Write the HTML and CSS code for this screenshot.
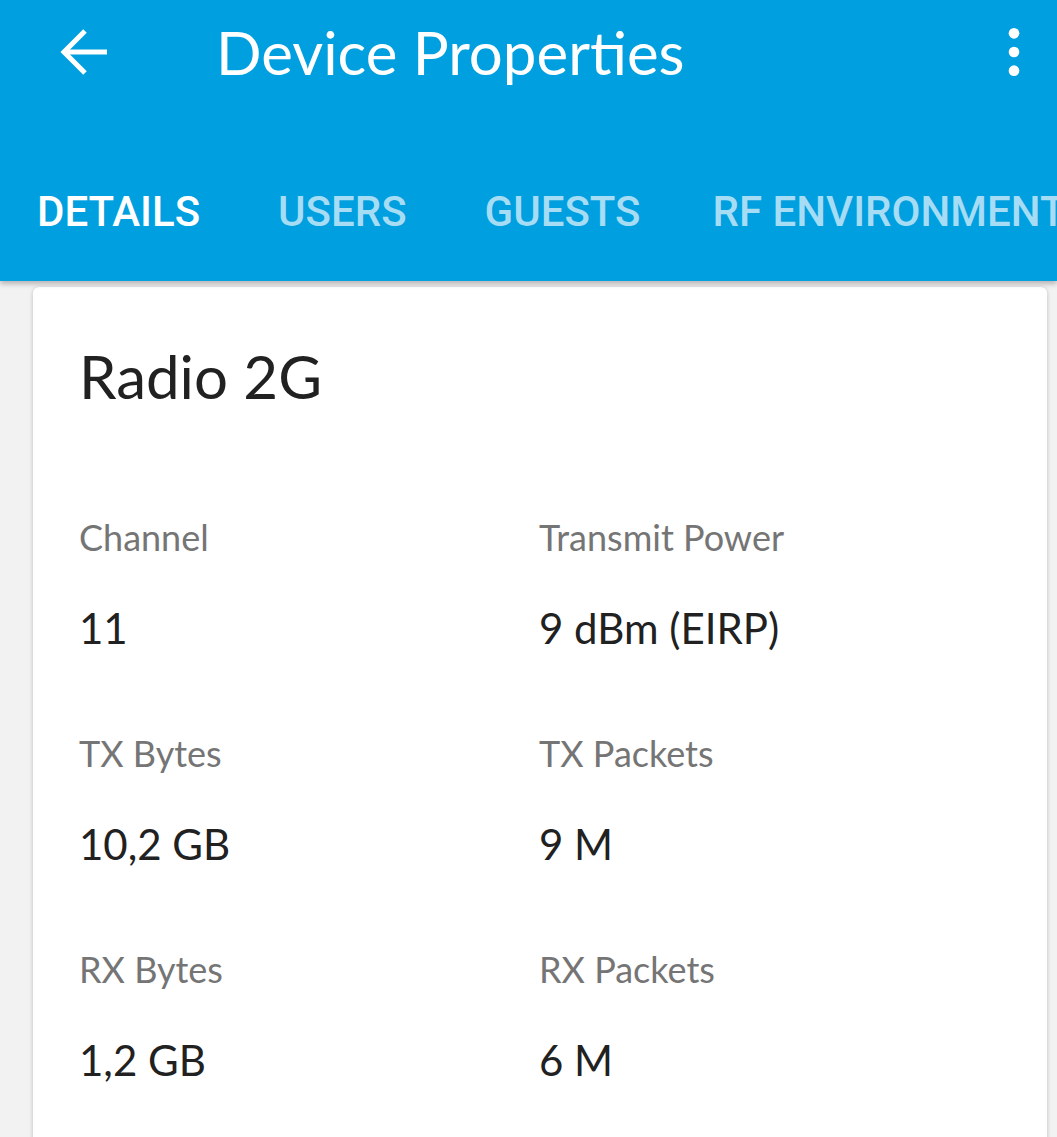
FILE: index.html
```html
<!DOCTYPE html>
<html lang="en">
<head>
  <meta charset="UTF-8">
  <title>Device Properties</title>
  <meta name="viewport" content="width=device-width, initial-scale=1.0" />
  <link rel="stylesheet" href="styles.css">
</head>
<body>

  <!-- App Bar -->
  <header class="appbar">
    <div class="toolbar">
      <button class="icon-btn back" aria-label="Back">
        <svg viewBox="0 0 48 48"><path d="M47 24H5M25 3L4 24l21 21" fill="none" stroke="#fff" stroke-width="5"/></svg>
      </button>
      <h1 class="title">Device Properties</h1>
      <button class="icon-btn more" aria-label="More">
        <svg viewBox="0 0 24 24"><circle cx="12" cy="5" r="2" fill="#fff"/><circle cx="12" cy="12" r="2" fill="#fff"/><circle cx="12" cy="19" r="2" fill="#fff"/></svg>
      </button>
    </div>
    <nav class="tabs">
      <span class="tab active">DETAILS</span>
      <span class="tab">USERS</span>
      <span class="tab">GUESTS</span>
      <span class="tab">RF ENVIRONMENT</span>
    </nav>
  </header>

  <!-- Radio card -->
  <main class="content">
    <section class="card">
      <h2 class="card-title">Radio 2G</h2>
      <div class="props">
        <div class="prop">
          <div class="label">Channel</div>
          <div class="value">11</div>
        </div>
        <div class="prop">
          <div class="label">Transmit Power</div>
          <div class="value">9 dBm (EIRP)</div>
        </div>
        <div class="prop">
          <div class="label">TX Bytes</div>
          <div class="value">10,2 GB</div>
        </div>
        <div class="prop">
          <div class="label">TX Packets</div>
          <div class="value">9 M</div>
        </div>
        <div class="prop">
          <div class="label">RX Bytes</div>
          <div class="value">1,2 GB</div>
        </div>
        <div class="prop">
          <div class="label">RX Packets</div>
          <div class="value">6 M</div>
        </div>
      </div>
    </section>
  </main>

</body>
</html>
```

FILE: styles.css
```css
* { box-sizing: border-box; }

body {
  font-family: Lato, "Noto Sans", sans-serif;
  background-color: #f2f2f2;
  margin: 0;
  padding: 0;
  overflow: hidden;
}

/* App Bar */
.appbar {
  background-color: #009fdf;
  color: #fff;
  height: 281px;
  box-shadow: 0 3px 5px rgba(0,0,0,0.25);
  position: relative;
  z-index: 1;
}

.toolbar {
  display: flex;
  align-items: center;
  height: 104px;
  padding: 0 11px 0 60px;
}

.icon-btn {
  background: none;
  border: none;
  padding: 0;
  display: flex;
  align-items: center;
  justify-content: center;
  cursor: pointer;
}

.icon-btn.back { margin-right: 108px; }
.icon-btn.back svg { width: 48px; height: 48px; }
.icon-btn.more { margin-left: auto; }
.icon-btn.more svg { width: 64px; height: 64px; }

.title {
  margin: 0;
  font-size: 60px;
  font-weight: 400;
  white-space: nowrap;
}

.tabs {
  display: flex;
  white-space: nowrap;
  overflow: hidden;
  padding: 83px 0 0 37px;
  font-family: Roboto, sans-serif;
  font-weight: 500;
  font-size: 42px;
}

.tab {
  color: #a6dcf4;
  margin-right: 78px;
}

.tab:nth-child(3) { margin-right: 72px; }
.tab.active { color: #fff; }

/* Card */
.content {
  padding: 6px 10px 0 33px;
}

.card {
  background: #fff;
  border-radius: 6px;
  box-shadow: 0 1px 4px rgba(0,0,0,0.22);
  padding: 53px 46px 60px;
  min-height: 900px;
}

.card-title {
  margin: 0 0 103px;
  font-size: 60px;
  font-weight: 400;
  color: #212121;
}

.props {
  display: grid;
  grid-template-columns: 460px 1fr;
  row-gap: 78px;
}

.label {
  font-size: 36px;
  color: #757575;
  margin-bottom: 44px;
}

.value {
  font-size: 42px;
  color: #212121;
}
```
